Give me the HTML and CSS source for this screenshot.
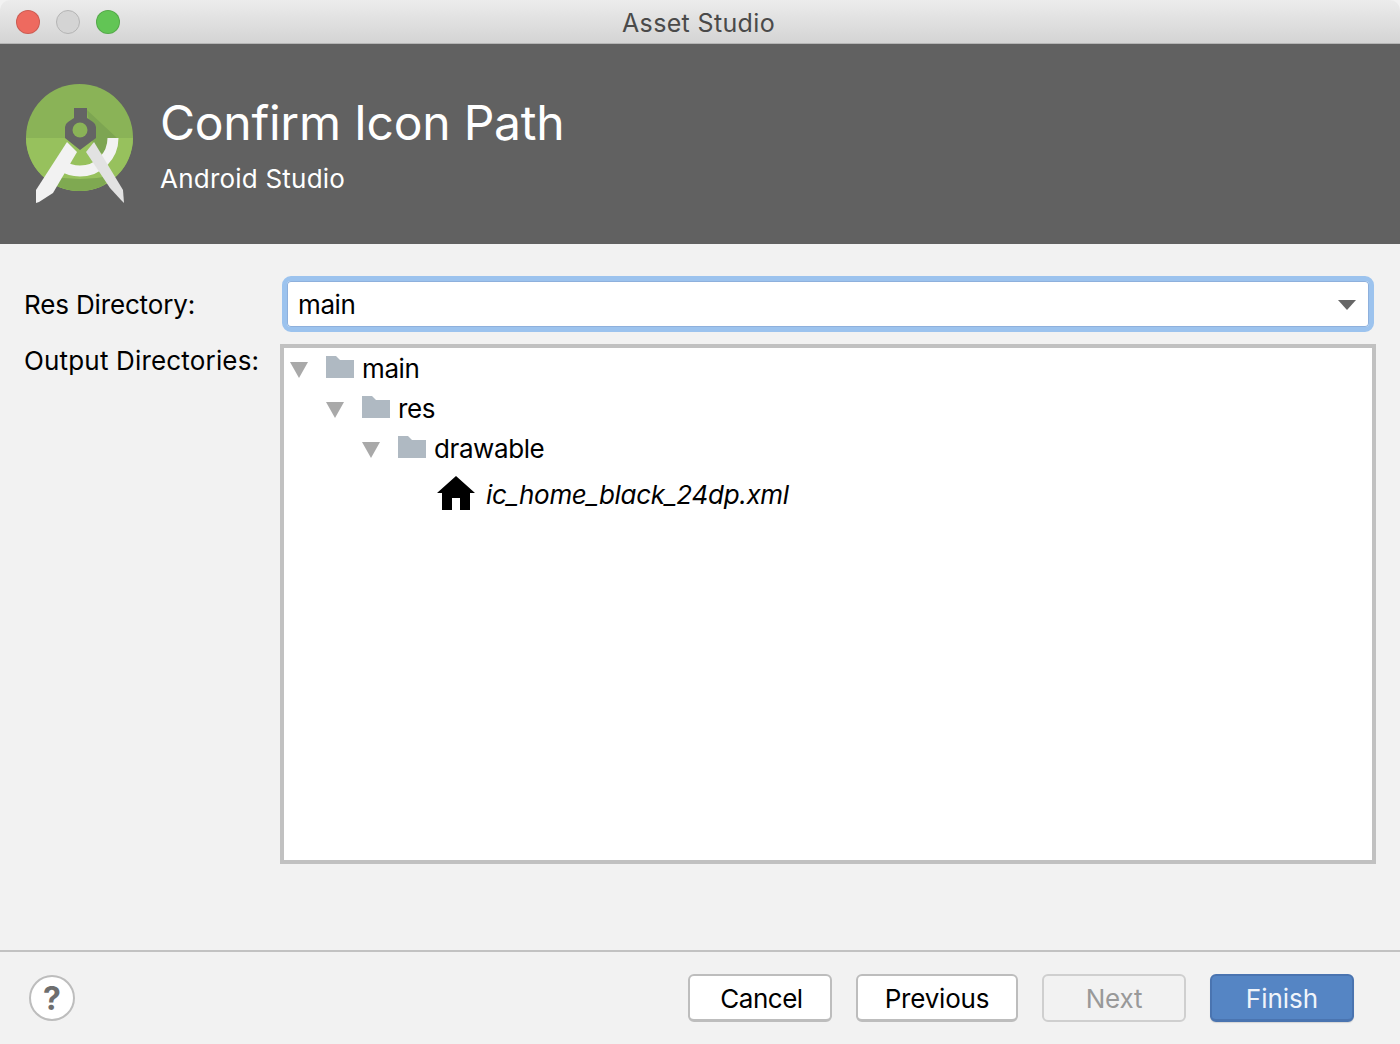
FILE: index.html
```html
<!DOCTYPE html>
<html lang="en">
<head>
<meta charset="utf-8">
<title>Asset Studio</title>
<link rel="stylesheet" href="styles.css">
</head>
<body>
<div class="window">
  <div class="titlebar">
    <div class="lights">
      <span class="light red"></span>
      <span class="light gray"></span>
      <span class="light green"></span>
    </div>
    <div class="title">Asset Studio</div>
  </div>
  <header class="banner">
    <svg class="logo" width="120" height="130" viewBox="24 80 120 130">
      <defs>
        <clipPath id="disc"><circle cx="79.5" cy="137.5" r="53.5"/></clipPath>
      </defs>
      <circle cx="79.5" cy="137.5" r="53.5" fill="#8ab357"/>
      <g clip-path="url(#disc)">
        <rect x="26" y="138" width="108" height="54" fill="#97c15d"/>
        <polygon points="87,110 117,138 108,156 94,150" fill="#7da552"/>
        <path d="M50 176 Q80 182 110 176 L100 192 H58 Z" fill="#7fa951"/>
      </g>
      <circle cx="80" cy="138" r="33" fill="none" stroke="#f2f2f2" stroke-width="11" stroke-dasharray="72 200" pathLength="207"/>
      <polygon points="67,142 77,152 53,193 39,202 36,203 36,190" fill="#f2f2f2"/>
      <polygon points="94,142 86,152 110,188 121,200 124,203 123,190" fill="#e2e2e2"/>
      <path d="M74 108 H87 V118 L93 122 Q96 124 96 127 V138 L80 150 L65 138 V127 Q65 124 68 122 L74 118 Z" fill="#646464"/>
      <circle cx="80" cy="130" r="7.5" fill="#8ab357"/>
    </svg>
    <div class="banner-text">
      <h1 class="banner-title">Confirm Icon Path</h1>
      <p class="banner-sub">Android Studio</p>
    </div>
  </header>
  <main class="content">
    <div class="form-row res-row">
      <label class="label res-label">Res Directory:</label>
      <div class="combo">
        <span class="combo-text">main</span>
        <span class="combo-arrow"></span>
      </div>
    </div>
    <div class="form-row out-row">
      <label class="label out-label">Output Directories:</label>
      <div class="tree">
        <div class="node depth0">
          <span class="twisty"></span>
          <svg class="folder" width="28" height="22" viewBox="0 0 28 22"><path d="M0 0H10L14 4H28V22H0Z" fill="#afb9c2"/></svg>
          <span>main</span>
        </div>
        <div class="node depth1">
          <span class="twisty"></span>
          <svg class="folder" width="28" height="22" viewBox="0 0 28 22"><path d="M0 0H10L14 4H28V22H0Z" fill="#afb9c2"/></svg>
          <span>res</span>
        </div>
        <div class="node depth2">
          <span class="twisty"></span>
          <svg class="folder" width="28" height="22" viewBox="0 0 28 22"><path d="M0 0H10L14 4H28V22H0Z" fill="#afb9c2"/></svg>
          <span>drawable</span>
        </div>
        <div class="node leaf">
          <svg class="home" width="40" height="36" viewBox="0 0 40 36"><path d="M20 1 L39 18 H34 V35 H24 V23 H16 V35 H6 V18 H1 Z" fill="#000"/></svg>
          <span class="file">ic_home_black_24dp.xml</span>
        </div>
      </div>
    </div>
  </main>
  <footer class="footer">
    <button class="help" type="button">?</button>
    <div class="buttons">
      <button class="btn cancel" type="button">Cancel</button>
      <button class="btn previous" type="button">Previous</button>
      <button class="btn next" type="button" disabled>Next</button>
      <button class="btn finish" type="button">Finish</button>
    </div>
  </footer>
</div>
</body>
</html>
```
FILE: styles.css
```css
* { box-sizing: border-box; }
html, body { margin: 0; padding: 0; background: #f2f2f2; }
body { font-family: Inter, "Liberation Sans", sans-serif; color: #000; }
.window { width: 1400px; height: 1044px; display: flex; flex-direction: column; background: #f2f2f2; overflow: hidden; border-radius: 10px; }
.titlebar { height: 44px; flex: none; position: relative; display: flex; align-items: center; justify-content: center; background: linear-gradient(#ececec, #d4d4d4); border-bottom: 1px solid #b5b5b5; }
.lights { position: absolute; left: 16px; top: 10px; display: flex; gap: 16px; }
.light { width: 24px; height: 24px; border-radius: 50%; border: 1px solid rgba(0,0,0,.14); }
.red { background: #ee6a5f; }
.gray { background: #d4d4d4; border-color: #b4b4b4; }
.green { background: #62c555; }
.title { font-size: 25px; color: #4a4a4a; letter-spacing: 0.35px; margin: 2px 3px 0 0; }
.banner { height: 200px; flex: none; background: #616161; display: flex; align-items: flex-start; padding: 36px 0 0 24px; }
.logo { flex: none; display: block; }
.banner-text { margin-left: 16px; color: #fff; }
.banner-title { margin: 14px 0 0; font-size: 48px; font-weight: 400; line-height: 58px; letter-spacing: -0.25px; }
.banner-sub { margin: 11px 0 0; font-size: 26px; line-height: 32px; letter-spacing: 0.22px; }
.content { flex: 1; padding: 32px 24px 0; }
.form-row { display: flex; }
.label { width: 256px; flex: none; font-size: 26px; line-height: 56px; }
.res-label { letter-spacing: -0.15px; padding-top: 1px; }
.res-row { height: 56px; }
.combo { width: 1092px; height: 56px; margin-left: 2px; border: 5px solid #9cc3ee; border-radius: 9px; background: #fff; box-shadow: inset 0 0 0 1px #8eb0dc; display: flex; align-items: center; justify-content: space-between; padding: 0 13px 0 11px; font-size: 26px; letter-spacing: -0.4px; }
.combo-arrow { width: 0; height: 0; border-left: 9px solid transparent; border-right: 9px solid transparent; border-top: 10px solid #666; margin-top: 2px; }
.out-row { margin-top: 12px; }
.out-label { line-height: 32px; margin-top: 1px; letter-spacing: 0.17px; }
.tree { width: 1096px; height: 520px; background: #fff; border: 4px solid #c1c1c1; padding: 0 0 0 6px; font-size: 26px; letter-spacing: -0.4px; }
.node { display: flex; align-items: center; height: 40px; }
.twisty { width: 0; height: 0; flex: none; border-left: 9px solid transparent; border-right: 9px solid transparent; border-top: 16px solid #a9a9a9; margin: 4px 18px 0 0; }
.folder { flex: none; margin-right: 8px; margin-top: -2px; }
.depth1 { padding-left: 36px; }
.depth2 { padding-left: 72px; }
.leaf { padding-left: 146px; height: 52px; }
.home { flex: none; margin-right: 10px; margin-top: -2px; }
.file { font-style: italic; font-size: 26px; letter-spacing: -0.3px; }
.footer { height: 94px; flex: none; border-top: 2px solid #c2c2c2; display: flex; align-items: center; justify-content: space-between; padding: 0 46px 0 29px; }
.help { width: 46px; height: 46px; border-radius: 50%; border: 2px solid #bdbdbd; background: #fff; color: #6e6e6e; font: 700 32px/1 Inter, sans-serif; padding: 2px 0 0; margin-top: -1px; }
.buttons { display: flex; gap: 24px; margin-top: -1px; }
.btn { width: 144px; height: 48px; border-radius: 6px; border: 2px solid #bdbdbd; border-bottom-width: 3px; background: #fff; font: 400 26px/1 Inter, sans-serif; color: #000; padding: 3px 0 0; letter-spacing: -0.2px; }
.cancel { letter-spacing: -0.5px; padding-left: 3px; }
.previous { width: 162px; }
.next { background: #f2f2f2; border: 2px solid #cfcfcf; color: #999; }
.finish { background: #5585c4; border-color: #4a74b0; color: #f0f4fa; letter-spacing: 0; box-shadow: 0 1px 1px rgba(0,0,0,.12); }
```
